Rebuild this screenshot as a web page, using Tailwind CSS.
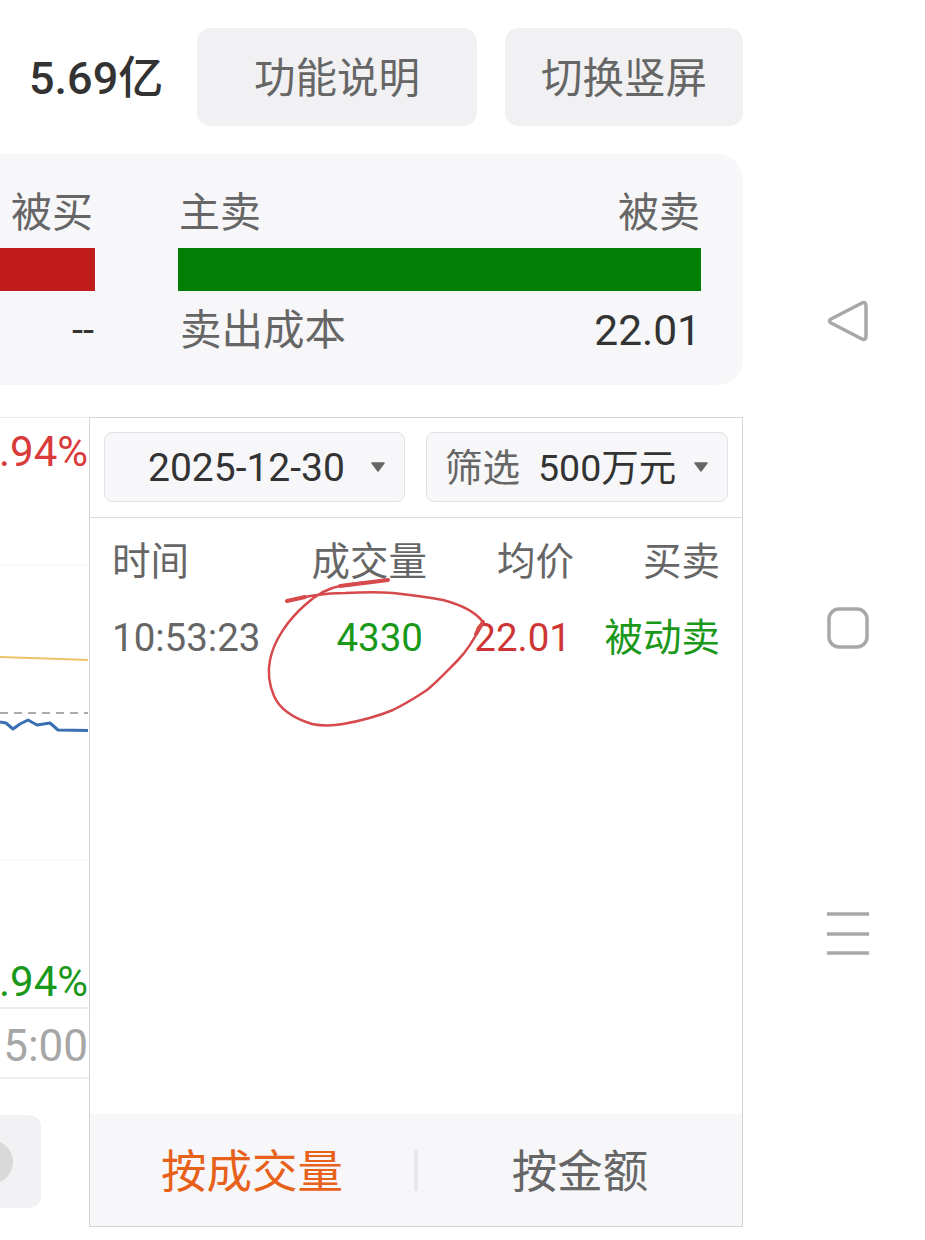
<!DOCTYPE html>
<html lang="zh-CN">
<head>
    <meta charset="UTF-8">
    <meta name="viewport" content="width=device-width, initial-scale=1.0">
    <title>成交明细</title>
    <script src="https://cdn.jsdelivr.net/npm/@tailwindcss/browser@4"></script>
</head>
<body class="relative w-[925px] h-[1240px] overflow-hidden bg-white font-['Roboto','Noto_Sans_CJK_SC',sans-serif] flex">
<main class="w-[743px] shrink-0 pt-[28px]">
    <!-- top buttons -->
    <div class="flex items-center h-[98px]">
        <div class="w-[197px] pl-[29px] pt-[3px] text-[45px] font-medium leading-none text-[#333333] whitespace-nowrap">5.69亿</div>
        <button class="w-[280px] h-[98px] pt-[5px] rounded-[14px] bg-[#f1f1f3] text-[41.5px] text-[#666666]">功能说明</button>
        <button class="w-[238px] h-[98px] pt-[5px] ml-[28px] rounded-[14px] bg-[#f1f1f3] text-[41.5px] text-[#666666]">切换竖屏</button>
    </div>

    <!-- buy / sell panel -->
    <div class="mt-[28px] h-[231px] rounded-r-[26px] bg-[#f7f7f9] flex">
        <div class="w-[95px] shrink-0 flex flex-col items-end">
            <div class="h-[94px] pt-[31px] pr-[2px] text-[41px] leading-[56px] text-[#666666]">被买</div>
            <div class="w-full h-[43px] bg-[#c11c1c]"></div>
            <div class="h-[80px] pr-[1px] text-[40px] leading-[80px] text-[#333333]">--</div>
        </div>
        <div class="w-[523px] ml-[83px] shrink-0 flex flex-col">
            <div class="h-[94px] pt-[31px] pl-[1px] pr-[1px] flex justify-between text-[41px] leading-[56px] text-[#666666]">
                <span>主卖</span><span>被卖</span>
            </div>
            <div class="w-full h-[43px] bg-[#007f04]"></div>
            <div class="h-[80px] pl-[2px] flex justify-between leading-[80px]">
                <span class="text-[41.5px] text-[#666666]">卖出成本</span><span class="text-[42.5px] text-[#333333]">22.01</span>
            </div>
        </div>
    </div>

    <div class="mt-[32px] flex">
        <!-- chart, cut off by the list on its right -->
        <div class="w-[89px] shrink-0 border-t border-[#eeeeee] overflow-hidden">
            <div class="h-[67px] flex items-center justify-end pr-[1px] text-[42px] leading-none text-[#d93a3a]">.94%</div>
            <svg class="block" width="89" height="471" viewBox="0 485 89 471">
                <line x1="0" y1="565" x2="88" y2="565" stroke="#e8e8e8" stroke-width="1" stroke-dasharray="1 1"/>
                <line x1="0" y1="860" x2="88" y2="860" stroke="#e8e8e8" stroke-width="1" stroke-dasharray="1 1"/>
                <path d="M0 657L30 658L60 659L88 660" fill="none" stroke="#ecc468" stroke-width="2"/>
                <line x1="0" y1="713" x2="88" y2="713" stroke="#aaaaaa" stroke-width="2" stroke-dasharray="8 6"/>
                <path d="M0 722L6 723L13 729L20 724L28 720L37 725L50 723L58 730L88 730.500" fill="none" stroke="#3a70b3" stroke-width="3" stroke-linejoin="round"/>
            </svg>
            <div class="h-[53px] flex items-center justify-end pr-[1px] border-b-2 border-[#eeeeee] text-[42px] leading-none text-[#1a981a]">.94%</div>
            <div class="h-[70px] pt-[5px] flex items-center justify-end pr-[1px] border-b-2 border-[#eeeeee] text-[44px] leading-none text-[#a6a6a6]">5:00</div>
            <div class="mt-[36px] w-[41px] h-[93px] rounded-r-[12px] bg-[#f2f2f4] overflow-hidden flex items-center justify-end pr-[28px]">
                <div class="w-[44px] h-[44px] shrink-0 rounded-full bg-[#d9d9d9]"></div>
            </div>
        </div>

        <!-- trade list -->
        <div class="w-[654px] h-[810px] shrink-0 border border-[#d4d4d4] flex flex-col">
            <div class="flex gap-[21px] pl-[14px] pt-[14px] pb-[15px] border-b border-[#dcdcdc]">
                <div class="w-[301px] h-[70px] rounded-[8px] border border-[#e2e2e6] bg-[#f7f7f9] flex items-center pl-[43px] text-[39px] text-[#333333]">
                    <span class="pt-[2px]">2025-12-30</span>
                    <svg class="ml-[26px]" width="14" height="10" viewBox="0 0 14 10"><path d="M1 1H13L7 9Z" fill="#666666" stroke="#666666" stroke-width="1.500" stroke-linejoin="round"/></svg>
                </div>
                <div class="w-[302px] h-[70px] rounded-[8px] border border-[#e2e2e6] bg-[#f7f7f9] flex items-center pl-[18px] text-[37.5px]">
                    <span class="text-[#666666] pt-[2px]">筛选</span>
                    <span class="ml-[18px] pt-[2px] text-[#333333]">500万元</span>
                    <svg class="ml-[18px]" width="14" height="10" viewBox="0 0 14 10"><path d="M1 1H13L7 9Z" fill="#666666" stroke="#666666" stroke-width="1.500" stroke-linejoin="round"/></svg>
                </div>
            </div>
            <div class="pl-[22px] grid grid-cols-[191px_124px_147px_146px] h-[88px] items-center text-[38.5px] text-[#666666]">
                <span>时间</span>
                <span class="justify-self-end whitespace-nowrap">成交量</span>
                <span class="justify-self-end">均价</span>
                <span class="justify-self-end">买卖</span>
            </div>
            <div class="pl-[22px] grid grid-cols-[191px_124px_147px_146px] h-[64px] items-center text-[38.5px]">
                <span class="text-[#666666]">10:53:23</span>
                <span class="justify-self-end pr-[4px] text-[#1a981a]">4330</span>
                <span class="justify-self-end pr-[3px] text-[#cf3434]">22.01</span>
                <span class="justify-self-end text-[#1a981a] whitespace-nowrap">被动卖</span>
            </div>
            <div class="mt-auto h-[112px] bg-[#f7f7f9] flex items-center text-[45.500px]">
                <span class="flex-1 text-center pt-[6px] text-[#e8611a]">按成交量</span>
                <span class="w-[4px] h-[42px] bg-[#e8e8ea]"></span>
                <span class="flex-1 text-center pt-[6px] text-[#666666]">按金额</span>
            </div>
        </div>
    </div>
</main>

<!-- system nav -->
<nav class="flex-1 flex flex-col items-start pl-[84px] pt-[300px]">
    <svg width="42" height="42" viewBox="0 0 42 42" fill="none" stroke="#a8a8a8" stroke-width="3.500" stroke-linejoin="round">
        <path d="M2.500 21Q2.500 20 4 19L35 3Q39 1.500 39 6V36Q39 40.500 35 39L4 23Q2.500 22 2.500 21Z"/>
    </svg>
    <svg class="mt-[265px]" width="42" height="42" viewBox="0 0 42 42" fill="none" stroke="#a8a8a8" stroke-width="3.500">
        <rect x="2" y="2" width="38" height="38" rx="10"/>
    </svg>
    <svg class="mt-[263px]" width="42" height="44" viewBox="0 0 42 44" stroke="#a8a8a8" stroke-width="3.500">
        <line x1="0" y1="2" x2="42" y2="2"/><line x1="0" y1="22" x2="42" y2="22"/><line x1="0" y1="41" x2="42" y2="41"/>
    </svg>
</nav>

<!-- hand-drawn annotation over the list -->
<svg class="absolute inset-0 pointer-events-none" width="925" height="1240" viewBox="0 0 925 1240" fill="none" stroke="#d6494c" stroke-linecap="round">
    <path d="M287 601C305 597 322 593 345 593C365 592 380 592 393 593C412 595 428 597 443 600C458 604 475 611 483 622C476 636 468 650 458 660C448 670 438 681 427 690C415 698 405 704 393 710C376 717 360 721 343 724C332 726 322 726 312 724C296 719 280 710 274 696C268 682 268 670 270 660C274 640 288 620 305 605C318 593 328 588 340 586C355 583 372 582 388 580" stroke-width="2.500"/>
    <path d="M287 601L305 597M340 586L388 580M483 622L476 634" stroke-width="4"/>
</svg>
</body>
</html>
